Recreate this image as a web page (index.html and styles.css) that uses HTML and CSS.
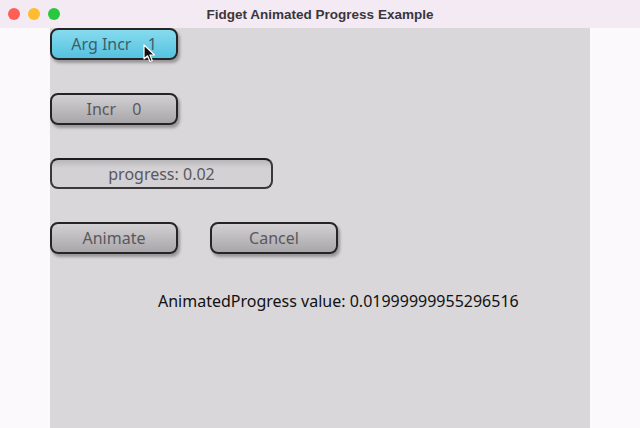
FILE: index.html
```html
<!DOCTYPE html>
<html lang="en">
<head>
    <meta charset="UTF-8">
    <title>Fidget Animated Progress Example</title>
    <link rel="stylesheet" href="styles.css">
</head>
<body>
    <div class="window">
        <div class="titlebar">
            <div class="lights">
                <span class="light red"></span>
                <span class="light yellow"></span>
                <span class="light green"></span>
            </div>
            <div class="title">Fidget Animated Progress Example</div>
        </div>

        <div class="panel">
            <div class="row">
                <button class="btn active">Arg Incr <span class="val">1</span></button>
            </div>
            <div class="row">
                <button class="btn">Incr <span class="val">0</span></button>
            </div>
            <div class="row">
                <div class="progress">progress: 0.02</div>
            </div>
            <div class="row">
                <button class="btn">Animate</button>
                <button class="btn">Cancel</button>
            </div>
            <p class="value">AnimatedProgress value: 0.01999999955296516</p>

            <svg class="cursor" width="14" height="20" viewBox="0 0 14 20">
                <path d="M1 1 L1 15 L4.5 11.8 L7 17.5 L9.3 16.5 L6.9 11 L11.5 11 Z" fill="#111" stroke="#fff" stroke-width="1.2" stroke-linejoin="round"/>
            </svg>
        </div>
    </div>
</body>
</html>
```

FILE: styles.css
```css
body {
    margin: 0;
    width: 640px;
    height: 428px;
    overflow: hidden;
    background: #fcf9fc;
    font-family: "Noto Sans", "Open Sans", sans-serif;
}

.window {
    height: 428px;
    display: flex;
    flex-direction: column;
}

.titlebar {
    height: 28px;
    flex: none;
    position: relative;
    display: flex;
    align-items: center;
    justify-content: center;
    background: #f4eaf4;
}

.lights {
    position: absolute;
    left: 8px;
    top: 8px;
    display: flex;
    gap: 8px;
}

.light {
    width: 12px;
    height: 12px;
    border-radius: 50%;
}

.red { background: #fe5f57; }
.yellow { background: #febc2e; }
.green { background: #28c840; }

.title {
    font-family: "Liberation Sans", Arial, sans-serif;
    font-weight: bold;
    font-size: 13.5px;
    color: #3a363a;
}

.panel {
    position: relative;
    margin-left: 50px;
    width: 540px;
    flex: 1;
    background: #d9d7da;
    display: flex;
    flex-direction: column;
    gap: 33px;
}

.row {
    display: flex;
    gap: 32px;
}

.btn {
    width: 128px;
    height: 32px;
    margin: 0;
    padding: 0;
    border: 2px solid #262426;
    border-radius: 8px;
    background: linear-gradient(#d2d0d3, #a8a6a9);
    box-shadow: 2px 3px 3px rgba(0, 0, 0, 0.3);
    font-family: "Noto Sans", "Open Sans", sans-serif;
    font-size: 16px;
    color: #5a585b;
    cursor: pointer;
}

.btn .val {
    margin-left: 12px;
}

.active {
    background: linear-gradient(#86dbef, #55c2df);
    color: #3e5e68;
}

.progress {
    width: 223px;
    height: 31px;
    box-sizing: border-box;
    border: 2px solid #3a383a;
    border-top-color: #1e1c1e;
    border-radius: 8px;
    background: linear-gradient(#b9b7ba, #d3d1d4 30%, #d3d1d4);
    display: flex;
    align-items: center;
    justify-content: center;
    font-size: 16px;
    color: #5a585b;
}

.value {
    margin: 3px 0 0 108px;
    font-size: 16px;
    color: #111;
}

.cursor {
    position: absolute;
    left: 93px;
    top: 16px;
}
```
